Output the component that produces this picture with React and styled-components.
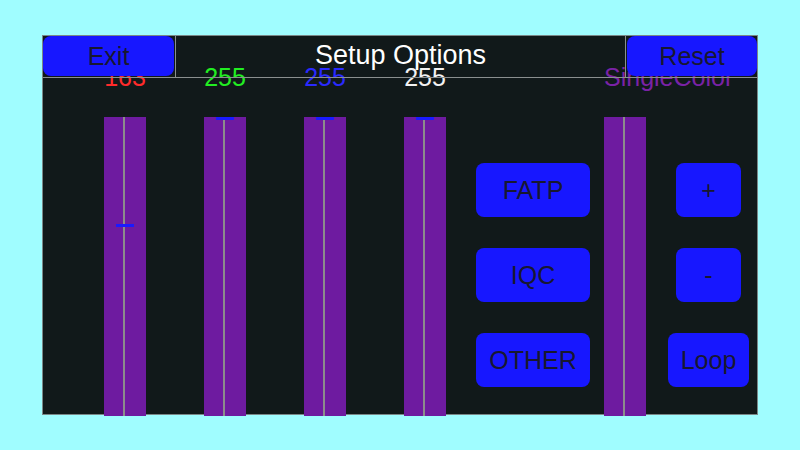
import React from 'react'
import styled, { createGlobalStyle } from 'styled-components'

const Global = createGlobalStyle`
  html, body {
    margin: 0;
    padding: 0;
    background: #a0fdff;
  }
  body {
    font-family: 'Liberation Sans', Arial, sans-serif;
  }
`

const channels = [
  { label: '163', color: '#ff2b2b', value: 163 },
  { label: '255', color: '#22ee22', value: 255 },
  { label: '255', color: '#2a2aff', value: 255 },
  { label: '255', color: '#f2f2f2', value: 255 },
]

function Slider({ label, color, value, ml, left }) {
  return (
    <SliderCol $ml={ml}>
      <Label $color={color} $left={left}>{label}</Label>
      <Track>
        {value != null && <Thumb style={{ top: `${(1 - value / 255) * 296}px` }} />}
      </Track>
    </SliderCol>
  )
}

export default function App() {
  return (
    <Page>
      <Global />
      <Panel>
        <Header>
          <Cell $w={133} $side="right">
            <Button $h={40}>Exit</Button>
          </Cell>
          <Title>Setup Options</Title>
          <Cell $w={132} $side="left">
            <Button $h={40}>Reset</Button>
          </Cell>
        </Header>
        <Body>
          {channels.map((c, i) => (
            <Slider key={i} {...c} ml={i === 0 ? 61 : 58} />
          ))}
          <ButtonCol $ml={30} $w={114}>
            <Button $h={54}>FATP</Button>
            <Button $h={54}>IQC</Button>
            <Button $h={54}>OTHER</Button>
          </ButtonCol>
          <Slider label="SingleColor" color="#7a22a6" left ml={14} />
          <ButtonCol $ml={22} $w={81}>
            <Button $h={54} $w={65}>+</Button>
            <Button $h={54} $w={65}>-</Button>
            <Button $h={54}>Loop</Button>
          </ButtonCol>
        </Body>
      </Panel>
    </Page>
  )
}

const Page = styled.div`
  width: 800px;
  height: 450px;
  padding: 35px 0 0 42px;
  box-sizing: border-box;
  overflow: hidden;
`

const Panel = styled.div`
  width: 716px;
  height: 380px;
  box-sizing: border-box;
  border: 1px solid #7a8888;
  background: #11191a;
  display: flex;
  flex-direction: column;
`

/* the header is see-through: the value labels show under its title row,
   only the buttons and the rule cover them */
const Header = styled.div`
  position: relative;
  z-index: 1;
  height: 41px;
  flex: none;
  display: flex;
  border-bottom: 1px solid #8a8f8f;
`

const Cell = styled.div`
  width: ${p => p.$w}px;
  flex: none;
  display: flex;
  border-${p => p.$side}: 1px solid #8a8f8f;
  padding-${p => p.$side}: 1px;
  padding-bottom: 1px;
  box-sizing: border-box;
  & > * {
    flex: 1;
  }
`

const Title = styled.div`
  flex: 1;
  display: flex;
  align-items: center;
  justify-content: center;
  color: #ffffff;
  font-size: 27px;
  padding-bottom: 2px;
`

const Body = styled.div`
  flex: 1;
  display: flex;
  align-items: flex-start;
`

const SliderCol = styled.div`
  width: 42px;
  flex: none;
  margin-left: ${p => p.$ml}px;
  display: flex;
  flex-direction: column;
  align-items: ${p => (p.$left ? 'flex-start' : 'center')};
`

const Label = styled.div`
  color: ${p => p.$color};
  font-size: 25px;
  line-height: 30px;
  margin-top: -16px;
  white-space: nowrap;
  align-self: ${p => (p.$left ? 'flex-start' : 'center')};
`

const Track = styled.div`
  position: relative;
  margin-top: 25px;
  width: 42px;
  height: 299px;
  background: #6e1ba0;
  &::before {
    content: '';
    position: absolute;
    left: 19px;
    top: 0;
    bottom: 0;
    width: 2px;
    background: #8c8c8c;
  }
`

const Thumb = styled.div`
  position: absolute;
  left: 12px;
  width: 18px;
  height: 3px;
  background: #1a1aff;
`

const ButtonCol = styled.div`
  width: ${p => p.$w}px;
  flex: none;
  margin-left: ${p => p.$ml}px;
  padding-top: 85px;
  display: flex;
  flex-direction: column;
  align-items: center;
  gap: 31px;
`

const Button = styled.button`
  height: ${p => p.$h}px;
  width: ${p => (p.$w ? `${p.$w}px` : '100%')};
  box-sizing: border-box;
  border: none;
  border-radius: 8px;
  background: #1717ff;
  color: #181830;
  font-family: 'Liberation Sans', Arial, sans-serif;
  font-size: 25px;
  padding: 0;
  cursor: pointer;
`
